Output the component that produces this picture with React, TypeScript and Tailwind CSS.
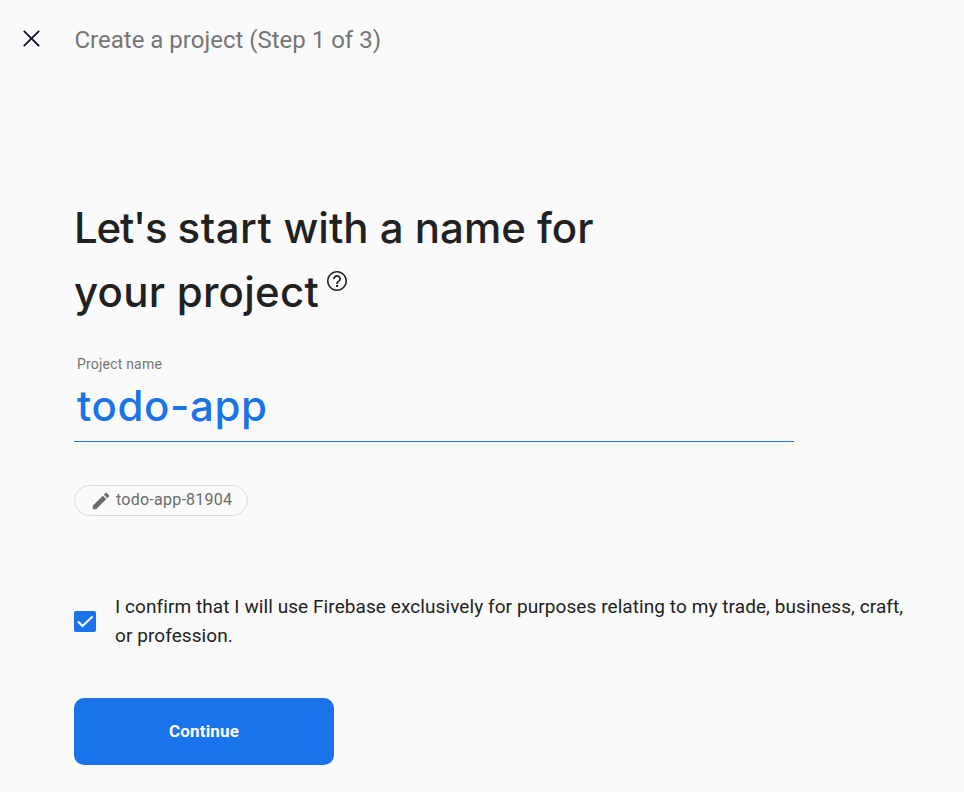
function CloseIcon() {
  return (
    <svg className="size-[29px] shrink-0" viewBox="0 0 24 24" fill="#14142e">
      <path d="M18.9 6.2 17.8 5.1 12 10.9 6.2 5.1 5.1 6.2 10.9 12 5.1 17.8 6.2 18.9 12 13.1 17.8 18.9 18.9 17.8 13.1 12z" />
    </svg>
  );
}

function HelpIcon() {
  return (
    <svg className="mt-[9px] ml-[6px] size-6 shrink-0" viewBox="0 0 24 24" fill="#202124">
      <path d="M11 18h2v-2h-2v2zm1-16C6.48 2 2 6.48 2 12s4.48 10 10 10 10-4.48 10-10S17.52 2 12 2zm0 18.4c-4.63 0-8.4-3.77-8.4-8.4s3.77-8.4 8.4-8.4 8.4 3.77 8.4 8.4-3.77 8.4-8.4 8.4zm0-14.4c-2.21 0-4 1.79-4 4h1.8c0-1.2.9-2.2 2.2-2.2s2.2.9 2.2 2.2c0 2-3.1 1.75-3.1 5h1.8c0-2.25 3.1-2.5 3.1-5 0-2.21-1.79-4-4-4z" />
    </svg>
  );
}

function PencilIcon() {
  return (
    <svg className="size-[22px] shrink-0" viewBox="0 0 24 24" fill="#6b6b6b">
      <path d="M3 17.25V21h3.75L17.81 9.94l-3.75-3.75L3 17.25zM20.71 7.04a1 1 0 0 0 0-1.41l-2.34-2.34a1 1 0 0 0-1.41 0l-1.83 1.83 3.75 3.75 1.83-1.83z" />
    </svg>
  );
}

export default function App() {
  return (
    <div className="h-[792px] w-[964px] overflow-hidden bg-[#fafafa] font-[Roboto,sans-serif] text-[#212121]">
      <header className="flex h-20 items-center pl-[17px]">
        <button className="-mt-[3px]" aria-label="Close">
          <CloseIcon />
        </button>
        <span className="ml-[28.5px] text-2xl whitespace-nowrap text-[#757575]">Create a project (Step 1 of 3)</span>
      </header>
      <main className="pt-[116px] pl-[74px]">
        <h1 className="font-[Inter,sans-serif] text-[42px] leading-[64px] font-medium whitespace-nowrap">
          <span className="block">
            <span className="tracking-[-1.2px]">Let's</span> <span className="tracking-[0.5px]">start</span> with a name for
          </span>
          <span className="flex h-16 items-start tracking-[0.25px]">
            your project
            <HelpIcon />
          </span>
        </h1>
        <div className="mt-7 h-[90px] w-[720px] border-b border-[#1a73e8]">
          <label className="block h-5 pt-0.5 pl-[3px] text-sm leading-5 tracking-[0.2px] text-[#757575]">Project name</label>
          <div className="pt-0.5 pl-[3px] font-[Inter,sans-serif] text-[42px] leading-[64px] font-medium tracking-[0.6px] text-[#1a73e8]">
            <span>todo-app</span>
          </div>
        </div>
        <div className="mt-[43px] flex h-[31px] w-[174px] items-center rounded-full border border-[#dadada] pl-[15px] text-[#6b6b6b]">
          <PencilIcon />
          <span className="-mt-0.5 ml-1 text-base tracking-[0.25px]">todo-app-81904</span>
        </div>
        <label className="mt-[76px] flex items-center">
          <span className="mt-px flex h-[21px] w-[22px] shrink-0 items-center justify-center rounded-xs bg-[#1a73e8]">
            <svg className="h-[21px] w-[22px]" viewBox="0 0 22 21" fill="none" stroke="white" strokeWidth="2">
              <path d="m4 10.5 4.5 4.5L18.5 5.5" />
            </svg>
          </span>
          <span className="ml-[19px] text-[19px] leading-[29px] tracking-[0.08px] whitespace-nowrap">
            I confirm that I will use Firebase exclusively for purposes relating to my trade, business, craft,
            <br />
            or profession.
          </span>
        </label>
        <button className="mt-12 flex h-[67px] w-[260px] items-center justify-center rounded-[10px] bg-[#1a73e8] text-[17px] font-bold tracking-[0.15px] text-white">
          Continue
        </button>
      </main>
    </div>
  );
}
